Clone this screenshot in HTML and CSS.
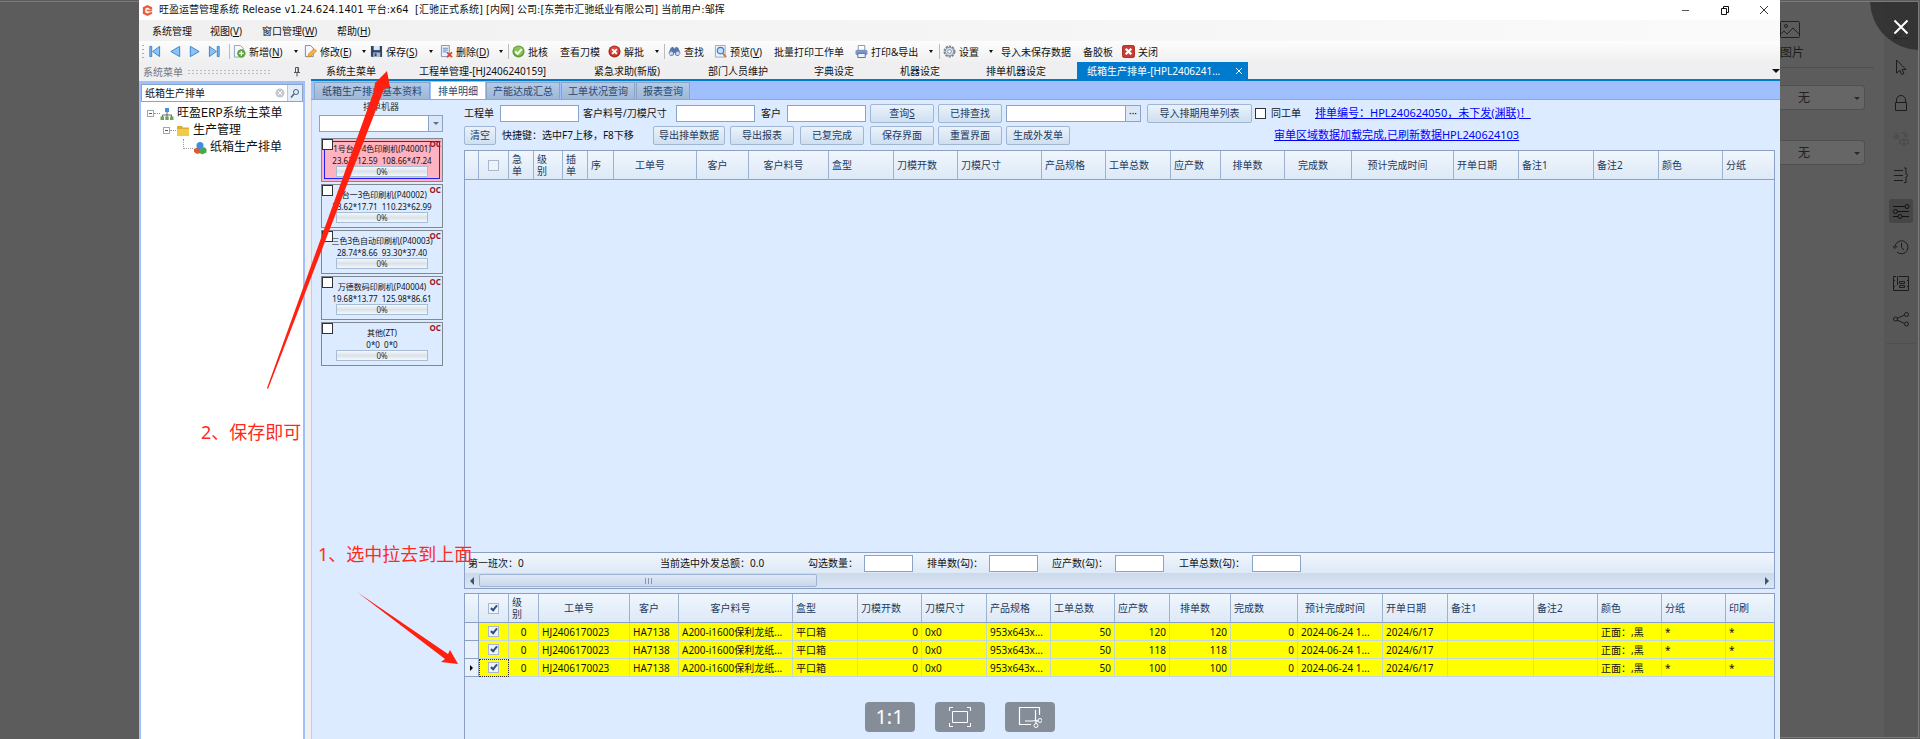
FILE: index.html
```html
<!DOCTYPE html>
<html lang="zh-CN">

<head>
    <meta charset="UTF-8">
    <meta name="viewport" content="width=device-width, initial-scale=1.0">
    <title>旺盈运营管理系统</title>
    <link rel="stylesheet" href="styles.css">
</head>

<body>

    <div class="viewer">
        <div class="backdrop-left"></div>

        <div class="window">
            <header class="titlebar">
                <svg class="logo" viewBox="0 0 14 14"><path d="M7 1L12 3.500V6H9.500V5L7 3.700 4.500 5V9L7 10.300 9.500 9H12V10.500L7 13 2 10.500V3.500Z" fill="#ee5a35"/><path d="M6 6H12V8H6Z" fill="#f0714f"/></svg>
                <h1>旺盈运营管理系统 Release v1.24.624.1401 平台:x64&nbsp; [汇驰正式系统] [内网] 公司:[东莞市汇驰纸业有限公司] 当前用户:邹挥</h1>
                <div class="window-buttons">
                    <button aria-label="最小化"><svg viewBox="0 0 10 10"><path d="M1 5.500H8" stroke="#555" fill="none"/></svg></button>
                    <button aria-label="还原"><svg viewBox="0 0 10 10"><path d="M1.500 3.500H6.500V9.500H1.500ZM3.500 3.500V1.500H8.500V7.500H6.500" stroke="#111" fill="none"/></svg></button>
                    <button aria-label="关闭窗口"><svg viewBox="0 0 10 10"><path d="M1 1L9 9M9 1L1 9" stroke="#333" fill="none"/></svg></button>
                </div>
            </header>

            <nav class="menubar">
                <button>系统管理</button>
                <button>视图(<u>V</u>)</button>
                <button>窗口管理(<u>W</u>)</button>
                <button>帮助(<u>H</u>)</button>
            </nav>

            <div class="toolbar">
                <span class="grip"></span>
                <button aria-label="首条"><svg viewBox="0 0 14 14"><path d="M2 1.500H4V12.500H2ZM12.500 1.500V12.500L5 7Z" fill="#8ec2f2" stroke="#2f7fd0"/></svg></button>
                <button aria-label="上一条"><svg viewBox="0 0 14 14"><path d="M11.500 1.500V12.500L2 7Z" fill="#8ec2f2" stroke="#2f7fd0"/></svg></button>
                <button aria-label="下一条"><svg viewBox="0 0 14 14"><path d="M2.500 1.500V12.500L12 7Z" fill="#8ec2f2" stroke="#2f7fd0"/></svg></button>
                <button aria-label="末条"><svg viewBox="0 0 14 14"><path d="M10 1.500H12V12.500H10ZM1.500 1.500V12.500L9 7Z" fill="#8ec2f2" stroke="#2f7fd0"/></svg></button>
                <span class="sep"></span>
                <button><svg viewBox="0 0 14 14"><path d="M1.500 .5H8L11 3.500V13H1.500Z" fill="#f4f7fc" stroke="#8a9fbd"/><circle cx="9" cy="9" r="4.500" fill="#59a338"/><path d="M9 6.500V11.500M6.500 9H11.500" stroke="#fff" stroke-width="1.500"/></svg>新增(<u>N</u>)</button>
                <button class="caret" aria-label="新增选项"></button>
                <button><svg viewBox="0 0 14 14"><path d="M1.500 .5H7L10 3.500V12.500H1.500Z" fill="#f4f7fc" stroke="#6d86b5"/><path d="M4 13L5 9.500 11 4 13.500 6.500 7.500 12Z" fill="#f5b43c" stroke="#c77b1d" stroke-width=".7"/></svg>修改(<u>E</u>)</button>
                <button class="caret" aria-label="修改选项"></button>
                <button><svg viewBox="0 0 14 14"><path d="M1 1H13V13H2L1 12Z" fill="#2f4668"/><path d="M4 1H10.500V5.500H4Z" fill="#dfe8f4"/><path d="M3.500 8H11V13H3.500Z" fill="#a9b9cf"/><path d="M5 9H7V12H5Z" fill="#2f4668"/></svg>保存(<u>S</u>)</button>
                <button class="caret" aria-label="保存选项"></button>
                <button><svg viewBox="0 0 14 14"><path d="M1.500 .5H10V12.500H1.500Z" fill="#edf3fb" stroke="#7590bd"/><path d="M3 3.500H8.500M3 5.500H8.500M3 7.500H7" stroke="#5c80bb"/><path d="M7.500 8L13 13M13 8L7.500 13" stroke="#e2432e" stroke-width="2"/></svg>删除(<u>D</u>)</button>
                <button class="caret" aria-label="删除选项"></button>
                <span class="sep"></span>
                <button><svg viewBox="0 0 14 14"><circle cx="7" cy="7" r="6.500" fill="#5d9e35"/><circle cx="7" cy="6.500" r="5" fill="#8cc45b"/><path d="M3.500 7L6 9.500 10.500 4.500" fill="none" stroke="#fff" stroke-width="2"/></svg>批核</button>
                <button>查看刀模</button>
                <button><svg viewBox="0 0 14 14"><circle cx="7" cy="7" r="6.500" fill="#b3261e"/><circle cx="7" cy="6.500" r="5" fill="#d9483c"/><path d="M4.500 4.500L9.500 9.500M9.500 4.500L4.500 9.500" stroke="#fff" stroke-width="2"/></svg>解批</button>
                <button class="caret" aria-label="解批选项"></button>
                <span class="sep"></span>
                <button><svg viewBox="0 0 14 14"><path d="M3 3L5.500 2 7 4 8.500 2 11 3 13.500 9 11 12 8 11 7 8 6 11 3 12 .5 9Z" fill="#5874ad"/><circle cx="3.500" cy="9" r="2" fill="#c9d9f3"/><circle cx="10.500" cy="9" r="2" fill="#c9d9f3"/></svg>查找</button>
                <button><svg viewBox="0 0 14 14"><path d="M1.500 .5H12V13H1.500Z" fill="#edf3fb" stroke="#8ba6cf"/><circle cx="7" cy="6" r="3.500" fill="#bfe0fb" stroke="#4a78b8" stroke-width="1.200"/><path d="M9.500 9L13 13" stroke="#c77b3d" stroke-width="2"/></svg>预览(<u>V</u>)</button>
                <button>批量打印工作单</button>
                <button><svg viewBox="0 0 14 14"><path d="M3.500 .5H10.500V6H3.500Z" fill="#fff" stroke="#7b90b5"/><rect x=".5" y="5" width="13" height="6" rx="2" fill="#7d96c4"/><path d="M3 9H11V13.500H3Z" fill="#eef4fc" stroke="#4a6aa5"/></svg>打印&amp;导出</button>
                <button class="caret" aria-label="打印选项"></button>
                <span class="sep"></span>
                <button><svg viewBox="0 0 14 14"><circle cx="7" cy="7" r="5.500" fill="#e8edf3" stroke="#7e8998" stroke-width="2" stroke-dasharray="2.500 1"/><circle cx="7" cy="7" r="4.500" fill="#d9e1ea" stroke="#7e8998"/><circle cx="7" cy="7" r="2" fill="#fff" stroke="#7e8998"/></svg>设置</button>
                <button class="caret" aria-label="设置选项"></button>
                <button>导入未保存数据</button>
                <button>备胶板</button>
                <button><svg viewBox="0 0 14 14"><rect x=".5" y=".5" width="13" height="13" rx="2" fill="#cb3a33" stroke="#9e2a26"/><path d="M4 4L10 10M10 4L4 10" stroke="#fff" stroke-width="2.500"/></svg>关闭</button>
            </div>

            <div class="workspace">
                <aside class="sidebar">
                    <div class="sidebar-title">
                        <span>系统菜单</span>
                        <i class="dots"></i>
                        <svg class="pin" viewBox="0 0 8 10"><path d="M2.500 .5H5.500V5.500H2.500ZM1 5.500H7M4 5.500V9.500M5 1V5" fill="none" stroke="#555"/></svg>
                    </div>
                    <div class="tree-panel">
                        <div class="search">
                            <input type="text" value="纸箱生产排单" aria-label="搜索菜单">
                            <svg class="clear" viewBox="0 0 10 10"><circle cx="5" cy="5" r="4.500" fill="#c3c9d0"/><path d="M3 3L7 7M7 3L3 7" stroke="#fff"/></svg>
                            <button aria-label="搜索"><svg viewBox="0 0 10 10"><circle cx="6" cy="4" r="2.500" fill="none" stroke="#4b5f80"/><path d="M4 6L1 9.500" stroke="#4b5f80" stroke-width="1.500"/></svg></button>
                        </div>
                        <ul class="tree">
                            <li>
                                <div class="node"><i class="fold"></i><i class="twig"></i><svg viewBox="0 0 14 14"><path d="M7 5V8M2.500 10V8H11.500V10M7 8V10" fill="none" stroke="#667"/><path d="M5 1H9V5H5Z" fill="#4b8fdc"/><path d="M.5 9.500H4V13H.5ZM5.300 9.500H8.700V13H5.300ZM10 9.500H13.500V13H10Z" fill="#6aa84f"/></svg>旺盈ERP系统主菜单</div>
                                <ul>
                                    <li>
                                        <div class="node"><i class="fold"></i><i class="twig"></i><svg viewBox="0 0 14 14"><path d="M1 2H6L7 3.500H13V12H1Z" fill="#dcae2a"/><path d="M1 5H13V12H1Z" fill="#efca4b"/></svg>生产管理</div>
                                        <ul>
                                            <li>
                                                <div class="node leaf"><svg viewBox="0 0 14 14"><path d="M1 8L5 6 8 8V12L4 13 1 11Z" fill="#e05a30"/><path d="M7 8L11 6 13.500 8V11.500L9 13.500 7 12Z" fill="#4ca64a"/><circle cx="7" cy="4.500" r="3.500" fill="#3f8fdd"/></svg>纸箱生产排单</div>
                                            </li>
                                        </ul>
                                    </li>
                                </ul>
                            </li>
                        </ul>
                    </div>
                </aside>

                <main class="main">
                    <div class="doc-tabs">
                        <button>系统主菜单</button>
                        <button>工程单管理-[HJ2406240159]</button>
                        <button>紧急求助(新版)</button>
                        <button>部门人员维护</button>
                        <button>字典设定</button>
                        <button>机器设定</button>
                        <button>排单机器设定</button>
                        <button class="active">纸箱生产排单-[HPL2406241... <svg viewBox="0 0 8 8"><path d="M1 1L7 7M7 1L1 7" stroke="#fff"/></svg></button>
                        <button class="caret big" aria-label="更多标签"></button>
                    </div>
                    <div class="page-tabs">
                        <button>纸箱生产排单基本资料</button>
                        <button class="active">排单明细</button>
                        <button>产能达成汇总</button>
                        <button>工单状况查询</button>
                        <button>报表查询</button>
                    </div>

                    <div class="page">
                        <section class="machines">
                            <label for="machine">排单机器</label>
                            <div class="combo"><select id="machine"><option></option></select><span class="combo-arrow"></span></div>

                            <article class="machine selected">
                                <input type="checkbox" aria-label="P40001"><b>OC</b>
                                <p>1号台一4色印刷机(P40001)</p>
                                <p>23.62*12.59&nbsp; 108.66*47.24</p>
                                <div class="bar">0%</div>
                            </article>
                            <article class="machine">
                                <input type="checkbox" aria-label="P40002"><b>OC</b>
                                <p>2台一3色印刷机(P40002)</p>
                                <p>23.62*17.71&nbsp; 110.23*62.99</p>
                                <div class="bar">0%</div>
                            </article>
                            <article class="machine">
                                <input type="checkbox" aria-label="P40003"><b>OC</b>
                                <p>三色3色自动印刷机(P40003)</p>
                                <p>28.74*8.66&nbsp; 93.30*37.40</p>
                                <div class="bar">0%</div>
                            </article>
                            <article class="machine">
                                <input type="checkbox" aria-label="P40004"><b>OC</b>
                                <p>万德数码印刷机(P40004)</p>
                                <p>19.68*13.77&nbsp; 125.98*86.61</p>
                                <div class="bar">0%</div>
                            </article>
                            <article class="machine">
                                <input type="checkbox" aria-label="ZT"><b>OC</b>
                                <p>其他(ZT)</p>
                                <p>0*0&nbsp; 0*0</p>
                                <div class="bar">0%</div>
                            </article>
                        </section>

                        <section class="detail">
                            <div class="filters row-query">
                                <label for="project">工程单</label>
                                <input type="text" id="project">
                                <label for="part">客户料号/刀模尺寸</label>
                                <input type="text" id="part">
                                <label for="customer">客户</label>
                                <input type="text" id="customer">
                                <button class="btn">查询<u>S</u></button>
                                <button class="btn">已排查找</button>
                                <div class="picker"><input type="text" aria-label="排期"><button aria-label="选择排期">···</button></div>
                                <button class="btn">导入排期甩单列表</button>
                                <label class="same"><input type="checkbox">同工单</label>
                                <a href="#">排单编号：HPL240624050，未下发(渊联)！</a>
                            </div>
                            <div class="filters row-actions">
                                <button class="btn">清空</button>
                                <span>快捷键：选中F7上移，F8下移</span>
                                <button class="btn">导出排单数据</button>
                                <button class="btn">导出报表</button>
                                <button class="btn">已复完成</button>
                                <button class="btn">保存界面</button>
                                <button class="btn">重置界面</button>
                                <button class="btn">生成外发单</button>
                                <a href="#">审单区域数据加载完成,已刷新数据HPL240624103</a>
                            </div>

                            <div class="grid grid-top">
                                <table>
                                    <colgroup>
                                        <col class="w14"><col class="w30"><col class="w25"><col class="w29"><col class="w25"><col class="w26"><col class="w83"><col class="w52"><col class="w80"><col class="w65"><col class="w64"><col class="w84"><col class="w64"><col class="w65"><col class="w50"><col class="w64"><col class="w67"><col class="w102"><col class="w65"><col class="w75"><col class="w65"><col class="w64"><col>
                                    </colgroup>
                                    <thead>
                                        <tr>
                                            <th></th>
                                            <th class="check"><input type="checkbox" class="tick" aria-label="全选"></th>
                                            <th>急<br>单</th>
                                            <th>级<br>别</th>
                                            <th>插<br>单</th>
                                            <th>序</th>
                                            <th class="mid">工单号</th>
                                            <th class="mid">客户</th>
                                            <th class="mid">客户料号</th>
                                            <th>盒型</th>
                                            <th>刀模开数</th>
                                            <th>刀模尺寸</th>
                                            <th>产品规格</th>
                                            <th>工单总数</th>
                                            <th>应产数</th>
                                            <th class="mid">排单数</th>
                                            <th class="mid">完成数</th>
                                            <th class="mid">预计完成时间</th>
                                            <th>开单日期</th>
                                            <th>备注1</th>
                                            <th>备注2</th>
                                            <th>颜色</th>
                                            <th>分纸</th>
                                        </tr>
                                    </thead>
                                </table>
                            </div>

                            <div class="summary">
                                <span>第一班次：0</span>
                                <span>当前选中外发总额：0.0</span>
                                <label for="sum1">勾选数量：</label>
                                <input type="text" id="sum1">
                                <label for="sum2">排单数(勾)：</label>
                                <input type="text" id="sum2">
                                <label for="sum3">应产数(勾)：</label>
                                <input type="text" id="sum3">
                                <label for="sum4">工单总数(勾)：</label>
                                <input type="text" id="sum4">
                            </div>
                            <div class="scrollbar">
                                <i class="arrow-left"></i>
                                <div class="track"><div class="thumb"></div></div>
                                <i class="arrow-right"></i>
                            </div>

                            <div class="grid grid-bottom">
                                <table>
                                    <colgroup>
                                        <col class="w14"><col class="w30"><col class="w30"><col class="w91"><col class="w49"><col class="w114"><col class="w65"><col class="w64"><col class="w65"><col class="w64"><col class="w64"><col class="w55"><col class="w61"><col class="w67"><col class="w85"><col class="w65"><col class="w86"><col class="w64"><col class="w64"><col class="w64"><col>
                                    </colgroup>
                                    <thead>
                                        <tr>
                                            <th></th>
                                            <th class="check"><input type="checkbox" class="tick" checked aria-label="全选"></th>
                                            <th>级<br>别</th>
                                            <th class="mid">工单号</th>
                                            <th class="mid">客户</th>
                                            <th class="mid">客户料号</th>
                                            <th>盒型</th>
                                            <th>刀模开数</th>
                                            <th>刀模尺寸</th>
                                            <th>产品规格</th>
                                            <th>工单总数</th>
                                            <th>应产数</th>
                                            <th class="mid">排单数</th>
                                            <th>完成数</th>
                                            <th class="mid">预计完成时间</th>
                                            <th>开单日期</th>
                                            <th>备注1</th>
                                            <th>备注2</th>
                                            <th>颜色</th>
                                            <th>分纸</th>
                                            <th>印刷</th>
                                        </tr>
                                    </thead>
                                    <tbody>
                                        <tr>
                                            <td class="handle"></td>
                                            <td class="check"><input type="checkbox" class="tick" checked aria-label="选择第1行"></td>
                                            <td class="mid">0</td>
                                            <td>HJ2406170023</td>
                                            <td>HA7138</td>
                                            <td>A200-i1600保利龙纸...</td>
                                            <td>平口箱</td>
                                            <td class="num">0</td>
                                            <td>0x0</td>
                                            <td>953x643x...</td>
                                            <td class="num">50</td>
                                            <td class="num">120</td>
                                            <td class="num">120</td>
                                            <td class="num">0</td>
                                            <td>2024-06-24 1...</td>
                                            <td>2024/6/17</td>
                                            <td></td>
                                            <td></td>
                                            <td>正面：,黑</td>
                                            <td>*</td>
                                            <td>*</td>
                                        </tr>
                                        <tr>
                                            <td class="handle"></td>
                                            <td class="check"><input type="checkbox" class="tick" checked aria-label="选择第2行"></td>
                                            <td class="mid">0</td>
                                            <td>HJ2406170023</td>
                                            <td>HA7138</td>
                                            <td>A200-i1600保利龙纸...</td>
                                            <td>平口箱</td>
                                            <td class="num">0</td>
                                            <td>0x0</td>
                                            <td>953x643x...</td>
                                            <td class="num">50</td>
                                            <td class="num">118</td>
                                            <td class="num">118</td>
                                            <td class="num">0</td>
                                            <td>2024-06-24 1...</td>
                                            <td>2024/6/17</td>
                                            <td></td>
                                            <td></td>
                                            <td>正面：,黑</td>
                                            <td>*</td>
                                            <td>*</td>
                                        </tr>
                                        <tr class="current">
                                            <td class="handle"><i></i></td>
                                            <td class="check"><input type="checkbox" class="tick" checked aria-label="选择第3行"></td>
                                            <td class="mid">0</td>
                                            <td>HJ2406170023</td>
                                            <td>HA7138</td>
                                            <td>A200-i1600保利龙纸...</td>
                                            <td>平口箱</td>
                                            <td class="num">0</td>
                                            <td>0x0</td>
                                            <td>953x643x...</td>
                                            <td class="num">50</td>
                                            <td class="num">100</td>
                                            <td class="num">100</td>
                                            <td class="num">0</td>
                                            <td>2024-06-24 1...</td>
                                            <td>2024/6/17</td>
                                            <td></td>
                                            <td></td>
                                            <td>正面：,黑</td>
                                            <td>*</td>
                                            <td>*</td>
                                        </tr>
                                    </tbody>
                                </table>
                            </div>
                        </section>
                    </div>
                </main>
            </div>

            <!-- 标注 -->
            <svg class="arrow arrow-save" viewBox="0 0 124 318"><path d="M0 317L107 20 108 12 120 0 123 16 117 18 1 318Z" fill="#ff2010"/></svg>
            <svg class="arrow arrow-drag" viewBox="0 0 102 72"><path d="M0 0L91 62 93 58 101 72 84 70 88 67Z" fill="#ff2010"/></svg>
            <p class="note note-save">2、保存即可</p>
            <p class="note note-drag">1、选中拉去到上面</p>

            <div class="viewer-tools">
                <button>1:1</button>
                <button aria-label="适应窗口"><svg viewBox="0 0 24 22"><path d="M1.500 5V1.500H5M19 1.500H22.500V5M22.500 17V20.500H19M5 20.500H1.500V17M4.500 5.500H19.500V16.500H4.500Z" fill="none" stroke="#fff"/></svg></button>
                <button aria-label="截图"><svg viewBox="0 0 24 22"><path d="M21.500 9V1.500H1.500V18.500H13M7 15H14L18 14.500M17.500 4V14L21 15.500M18 14L18 18" fill="none" stroke="#fff" stroke-width="1.200"/><circle cx="22" cy="14.500" r="2" fill="none" stroke="#fff"/><circle cx="18" cy="19.500" r="2" fill="none" stroke="#fff"/></svg></button>
            </div>
        </div>

        <div class="backdrop-right">
            <div class="props">
                <div class="props-head">
                    <svg viewBox="0 0 20 17"><rect x=".5" y=".5" width="19" height="16" rx="1" fill="none" stroke="#222"/><circle cx="6" cy="5" r="1.500" fill="none" stroke="#222"/><path d="M1 13L4 10 7 13 13 7 19 13" fill="none" stroke="#222"/></svg>
                    <span>图片</span>
                </div>
                <div class="dark-combo"><select aria-label="填充"><option>无</option></select></div>
                <div class="dark-combo"><select aria-label="边框"><option>无</option></select></div>
            </div>
            <nav class="rail">
                <button aria-label="编辑"><svg viewBox="0 0 18 18"><path d="M1 16.500H16M3 15.500L4 11 12 3 15 6 7 14Z" fill="none" stroke="#1c1c1c"/></svg></button>
                <button aria-label="选择"><svg viewBox="0 0 18 18"><path d="M4.500 2L14 11.500H10L12 15.500 9.500 16.500 8 12.500 4.500 15Z" fill="none" stroke="#1c1c1c"/></svg></button>
                <button aria-label="保护"><svg viewBox="0 0 18 18"><path d="M3.500 8.500H14.500V16.500H3.500ZM4.500 8.500V6A4.500 4.500 0 0 1 13.500 6V8.500" fill="none" stroke="#1c1c1c"/></svg></button>
                <button aria-label="翻译"><svg viewBox="0 0 18 18"><path d="M2 4Q6 2 6 5V9M6 6Q1 5 2 8 4 10 6 7M9 3H14V6M12 5L14 7 16 5M8 10H16V14H8ZM12 8V17" fill="none" stroke="#484848"/></svg></button>
                <button aria-label="大纲"><svg viewBox="0 0 18 18"><path d="M2 4.500H11M2 9.500H11M2 14.500H11M12 2H14V8L16 9.500 14 11V16.500H12" fill="none" stroke="#1c1c1c"/></svg></button>
                <button class="active" aria-label="属性"><svg viewBox="0 0 18 18"><path d="M1 4.500H13M5.500 9.500H17M1 14.500H6M10 14.500H17" fill="none" stroke="#111"/><circle cx="15" cy="4.500" r="2" fill="none" stroke="#111"/><circle cx="3.500" cy="9.500" r="2" fill="none" stroke="#111"/><circle cx="8" cy="14.500" r="2" fill="none" stroke="#111"/></svg></button>
                <button aria-label="历史"><svg viewBox="0 0 18 18"><path d="M3 9A6.500 6.500 0 1 1 5 14M1 8L3 10.500 5.500 8M9.500 5V9.500L12 12" fill="none" stroke="#1c1c1c"/></svg></button>
                <button aria-label="图库"><svg viewBox="0 0 18 18"><path d="M4 2.500H1.500V16.500H16.500V2.500H7M5.500 2V11M1 6.500H3M1 12.500H3M15 6.500H17M15 12.500H17M7.500 7.500H12.500V9.500H7.500ZM7.500 11.500H12.500V13.500H7.500Z" fill="none" stroke="#1c1c1c"/></svg></button>
                <button aria-label="分享"><svg viewBox="0 0 18 18"><path d="M5 8.500L12.500 5M5 10L12.500 13.500" stroke="#1c1c1c"/><circle cx="3.500" cy="9" r="2" fill="none" stroke="#1c1c1c"/><circle cx="14.500" cy="4.500" r="2" fill="none" stroke="#1c1c1c"/><circle cx="14.500" cy="14" r="2" fill="none" stroke="#1c1c1c"/></svg></button>
            </nav>
            <button class="close-viewer" aria-label="关闭"><svg viewBox="0 0 16 16"><path d="M1.500 1.500L14.500 14.500M14.500 1.500L1.500 14.500" stroke="#fff" stroke-width="2"/></svg></button>
        </div>
    </div>

</body>

</html>
```
FILE: styles.css
```css
* {
    box-sizing: border-box;
}

body {
    margin: 0;
    font-family: "Noto Sans", "Noto Sans CJK SC", sans-serif;
    font-size: 10px;
    line-height: 14px;
    color: #111;
    background-color: #5c5c5c;
}

button,
input,
select {
    font: inherit;
    color: inherit;
    margin: 0;
    padding: 0;
}

button {
    border: 0;
    background: none;
    white-space: nowrap;
}

svg {
    display: block;
    flex: none;
}

ul,
p,
h1 {
    margin: 0;
    padding: 0;
}

/* viewer */
.viewer {
    display: grid;
    grid-template-columns: 139px minmax(0, 1fr) 140px;
    height: 100vh;
    min-height: 600px;
    overflow: hidden;
}

.backdrop-left {
    margin-top: 1px;
    border-top: 1px solid #7a7a7a;
}

.window {
    position: relative;
    display: flex;
    flex-direction: column;
    min-width: 0;
    overflow: hidden;
    background-color: #f0f0f0;
}

/* title and menu */
.titlebar {
    display: flex;
    align-items: center;
    height: 20px;
    padding-left: 2px;
    background-color: #fff;
}

.logo {
    width: 13px;
    height: 13px;
    margin-right: 5px;
}

.titlebar h1 {
    flex: 1;
    font-family: "DejaVu Sans", "Noto Sans CJK SC", sans-serif;
    font-size: 10px;
    font-weight: normal;
    white-space: nowrap;
}

.window-buttons {
    display: flex;
    gap: 29px;
    padding-right: 11px;
}

.window-buttons svg {
    width: 10px;
    height: 10px;
}

.menubar {
    display: grid;
    grid-template-columns: 58px 52px 75px 60px;
    height: 21px;
    padding-left: 13px;
    background: linear-gradient(to right, #f0f0f0, #fafafa);
}

.menubar button {
    text-align: left;
}

.toolbar {
    display: grid;
    grid-template-columns: 6px 21px 19px 20px 21px 4px 59px 12px 56px 10px 57px 13px 57px 11px 4px 48px 48px 45px 11px 4px 46px 60px 81px 72px 12px 4px 44px 14px 82px 39px 60px;
    align-items: center;
    height: 21px;
    padding-left: 3px;
    background: linear-gradient(#fdfdfd, #f0f0f0);
}

.toolbar button {
    display: flex;
    align-items: center;
    height: 20px;
}

.toolbar svg {
    width: 13px;
    height: 13px;
    margin-right: 3px;
}

.grip {
    height: 14px;
    width: 2px;
    background: repeating-linear-gradient(#aaa 0 1px, transparent 1px 4px);
}

.sep {
    width: 1px;
    height: 15px;
    background-color: #bbb;
}

.caret::before {
    content: "";
    width: 0;
    border: 2px solid transparent;
    border-top: 3px solid #111;
    border-bottom: 0;
    margin-left: 2px;
}

/* workspace */
.workspace {
    display: flex;
    flex: 1;
    min-height: 0;
}

.sidebar {
    display: flex;
    flex-direction: column;
    width: 172px;
    flex: none;
    background-color: #efeff2;
}

.sidebar-title {
    display: flex;
    align-items: center;
    height: 19px;
    padding-left: 4px;
    color: #777;
}

.dots {
    width: 84px;
    height: 5px;
    margin: 0 22px 0 4px;
    background-image: radial-gradient(#bbb 1px, transparent 1px);
    background-size: 4px 3px;
}

.pin {
    width: 8px;
    height: 10px;
}

.tree-panel {
    flex: 1;
    width: 166px;
    border: 2px solid #a0bfff;
    border-top-width: 3px;
    border-bottom: 0;
    background-color: #fff;
}

.search {
    display: flex;
    align-items: center;
    height: 18px;
    border: 1px solid #8aa4c8;
}

.search input {
    flex: 1;
    min-width: 0;
    border: 0;
    padding-left: 3px;
    outline: 0;
}

.search .clear {
    width: 10px;
    height: 10px;
    margin-right: 2px;
}

.search button {
    width: 15px;
    height: 16px;
    padding-left: 2px;
    border-left: 1px solid #b4c6e0;
    background-color: #e3edfa;
}

.search button svg {
    width: 10px;
    height: 10px;
}

.tree {
    padding: 3px 0 0 6px;
    list-style: none;
    font-family: "Liberation Mono", "Noto Sans CJK SC", monospace;
    font-size: 12px;
}

.tree ul {
    list-style: none;
    padding-left: 16px;
}

.node {
    display: flex;
    align-items: center;
    height: 17px;
    white-space: nowrap;
}

.node svg {
    width: 14px;
    height: 14px;
    margin-right: 3px;
}

.fold {
    width: 7px;
    height: 7px;
    border: 1px solid #9aa;
    background: linear-gradient(#557, #557) center / 3px 1px no-repeat;
}

.twig {
    width: 6px;
    border-top: 1px dotted #999;
}

.leaf::before {
    content: "";
    width: 9px;
    height: 9px;
    margin: 0 0 8px 4px;
    border: 1px dotted #999;
    border-width: 0 0 1px 1px;
}

.main {
    display: flex;
    flex-direction: column;
    flex: 1;
    min-width: 0;
    background-color: #dcebff;
}

.doc-tabs {
    display: grid;
    grid-template-columns: 93px 175px 114px 106px 86px 86px 91px 171px 1fr;
    height: 19px;
    padding-left: 15px;
    border-bottom: 2px solid #007acc;
    background-color: #efeff2;
}

.doc-tabs button {
    text-align: left;
}

.doc-tabs .active {
    display: flex;
    align-items: center;
    justify-content: space-between;
    padding: 0 5px 0 10px;
    color: #fff;
    background-color: #007acc;
}

.doc-tabs svg {
    width: 8px;
    height: 8px;
}

.doc-tabs .caret {
    justify-self: end;
}

.big::before {
    display: block;
    border-width: 4px;
    border-top-width: 4px;
}

.page-tabs {
    display: flex;
    gap: 1px;
    height: 19px;
    padding: 1px 0 0 3px;
    border-bottom: 1px solid #8aa7d8;
    background-color: #a0bfff;
}

.page-tabs button {
    padding: 0 6px;
    border: 1px solid #8aa4c8;
    border-bottom: 0;
    color: #2b466e;
    background: linear-gradient(#b5cae6, #9db7d6);
}

.page-tabs button:first-child {
    min-width: 116px;
}

.page-tabs .active {
    border-color: #fff;
    background: #fff;
}

.page {
    display: flex;
    flex: 1;
    min-height: 0;
}

/* machine list */
.machines {
    display: flex;
    flex-direction: column;
    gap: 2px;
    width: 152px;
    flex: none;
    padding: 1px 20px 0 7px;
    border-left: 1px solid #b9cfee;
    font-size: 8px;
    line-height: 12px;
}

.machines > label {
    text-align: center;
    font-size: 9px;
    color: #333;
}

.combo {
    position: relative;
    height: 17px;
    margin: 0 0 4px;
}

.combo select {
    appearance: none;
    width: 100%;
    height: 17px;
    border: 1px solid #8aa4c8;
    border-radius: 0;
    background-color: #fff;
}

.combo-arrow {
    position: absolute;
    top: 1px;
    right: 1px;
    width: 14px;
    height: 15px;
    border-left: 1px solid #8aa4c8;
    background-color: #dbe7f6;
    pointer-events: none;
}

.combo-arrow::before {
    content: "";
    position: absolute;
    top: 6px;
    left: 4px;
    border: 3px solid transparent;
    border-top-color: #5b6f92;
    border-bottom: 0;
}

.machine {
    position: relative;
    height: 44px;
    margin-left: 2px;
    padding-top: 4px;
    border: 1px solid #808890;
    text-align: center;
    white-space: nowrap;
}

.selected {
    background-color: #ffb3c0;
    outline: 1px solid #2222ee;
    outline-offset: -4px;
}

.machine input {
    position: absolute;
    top: 0;
    left: 0;
}

.machine b {
    position: absolute;
    top: 0;
    right: 1px;
    line-height: 10px;
    color: #a01525;
}

.bar {
    width: 92px;
    height: 11px;
    margin: -1px auto 0;
    border: 1px solid #a9bcd6;
    line-height: 9px;
    color: #333;
    background: linear-gradient(#f5f8fb, #d9e2ea, #f5f8fb);
}

input[type="checkbox"] {
    appearance: none;
    width: 11px;
    height: 11px;
    border: 1px solid #333;
    background-color: #fff;
}

input.tick {
    display: block;
    width: 11px;
    height: 11px;
    margin: 0 auto;
    border-color: #a9b8cc;
    background-color: #eef3f9;
}

.tick:checked::before {
    content: "";
    display: block;
    width: 2px;
    height: 5px;
    margin: 0 0 0 3px;
    border: solid #2f4f82;
    border-width: 0 2px 2px 0;
    box-sizing: content-box;
    rotate: 40deg;
}

/* filters */
.detail {
    display: flex;
    flex-direction: column;
    flex: 1;
    min-width: 0;
    padding: 2px 5px 0 1px;
}

.filters {
    display: grid;
    align-items: center;
    height: 22px;
    white-space: nowrap;
}

.row-query {
    grid-template-columns: 36px 83px 93px 85px 26px 83px 68px 68px 141px 108px 60px 1fr;
}

.row-actions {
    grid-template-columns: 38px 151px 77px 70px 70px 68px 68px 268px 1fr;
}

.filters input[type="text"],
.summary input {
    height: 17px;
    border: 1px solid #8aa4c8;
    background-color: #fff;
}

.filters > input[type="text"] {
    width: 79px;
}

.btn {
    justify-self: start;
    min-width: 64px;
    height: 19px;
    padding: 0 5px;
    border: 1px solid #a0b6d3;
    border-radius: 2px;
    color: #1e395b;
    background: linear-gradient(#eaf2fc, #cfdff0);
}

.btn:first-child {
    min-width: 32px;
}

.row-query .btn:nth-of-type(3) {
    min-width: 105px;
}

.picker {
    display: flex;
    width: 135px;
}

.picker input {
    flex: 1;
    min-width: 0;
}

.picker button {
    width: 15px;
    border: 1px solid #8aa4c8;
    border-left: 0;
    line-height: 12px;
    background-color: #dbe7f6;
}

.same {
    display: flex;
    align-items: center;
    gap: 5px;
}

.filters a {
    font-size: 11px;
    color: #0000ff;
}

/* grids */
.grid {
    overflow: hidden;
    border: 1px solid #8ba0c4;
    border-bottom: 0;
}

.grid-top {
    flex: 1;
    margin-top: 4px;
}

.grid-bottom {
    height: 146px;
    margin-top: 4px;
}

table {
    width: 100%;
    table-layout: fixed;
    border-collapse: separate;
    border-spacing: 0;
}

.w14 { width: 14px; }
.w25 { width: 25px; }
.w26 { width: 26px; }
.w29 { width: 29px; }
.w30 { width: 30px; }
.w49 { width: 49px; }
.w50 { width: 50px; }
.w52 { width: 52px; }
.w55 { width: 55px; }
.w61 { width: 61px; }
.w64 { width: 64px; }
.w65 { width: 65px; }
.w67 { width: 67px; }
.w75 { width: 75px; }
.w80 { width: 80px; }
.w83 { width: 83px; }
.w84 { width: 84px; }
.w85 { width: 85px; }
.w86 { width: 86px; }
.w91 { width: 91px; }
.w102 { width: 102px; }
.w114 { width: 114px; }

th {
    height: 29px;
    padding: 0 0 0 3px;
    border-right: 1px solid #9db2d2;
    border-bottom: 1px solid #8ba0c4;
    font-weight: normal;
    line-height: 12px;
    text-align: left;
    white-space: nowrap;
    color: #1e395b;
    background: linear-gradient(#f0f6fd, #dde9f7);
}

th.mid {
    padding: 0 10px 0 0;
    text-align: center;
}

th.check,
td.check {
    padding: 0;
}

td {
    height: 18px;
    padding: 0 3px;
    border-right: 1px solid #c9d8b8;
    border-bottom: 1px solid #c3d6ec;
    line-height: 14px;
    white-space: nowrap;
    background-color: #ffff00;
}

th:last-child,
td:last-child {
    border-right: 0;
}

td.mid {
    text-align: center;
}

td.num {
    text-align: right;
}

td.handle {
    padding: 0 0 0 5px;
    border-color: #8ba0c4;
    background-color: #e8f1fc;
}

.handle i {
    display: block;
    width: 0;
    border: 3px solid transparent;
    border-left-color: #000;
    border-right: 0;
}

.current .check {
    outline: 1px dotted #333;
    outline-offset: -1px;
}

.summary {
    display: grid;
    grid-template-columns: 192px 148px 56px 63px 62px 63px 63px 64px 73px 49px;
    align-items: center;
    height: 21px;
    padding-left: 3px;
    border: 1px solid #8ba0c4;
    border-bottom: 0;
    white-space: nowrap;
    background: linear-gradient(#f0f6fd, #dde9f7);
}

.summary input {
    width: 49px;
}

.scrollbar {
    display: flex;
    align-items: center;
    height: 16px;
    padding: 0 5px;
    border: 1px solid #8ba0c4;
    border-top: 0;
    background: linear-gradient(#cbd9ea, #dbe7f4);
}

.track {
    flex: 1;
    margin: 0 5px;
}

.thumb {
    width: 338px;
    height: 13px;
    border: 1px solid #9fb4d2;
    border-radius: 2px;
    background: repeating-linear-gradient(to right, #8397b8 0 1px, transparent 1px 3px) center / 7px 6px no-repeat, linear-gradient(#dfe9f6, #c8d8eb);
}

.arrow-left,
.arrow-right {
    border: 4px solid transparent;
    border-left: 0;
    border-right: 4px solid #3f5375;
}

.arrow-right {
    border-right: 0;
    border-left: 4px solid #3f5375;
}

/* notes drawn over the window */
.arrow {
    position: absolute;
    pointer-events: none;
}

.arrow-save {
    top: 71px;
    left: 128px;
    width: 124px;
    height: 318px;
}

.arrow-drag {
    top: 592px;
    left: 218px;
    width: 102px;
    height: 72px;
}

.note {
    position: absolute;
    font-size: 18px;
    line-height: 24px;
    white-space: nowrap;
    color: #ff2a1a;
}

.note-save {
    top: 420px;
    left: 62px;
}

.note-drag {
    top: 542px;
    left: 179px;
}

.viewer-tools {
    position: absolute;
    right: 0;
    bottom: 7px;
    left: 0;
    display: flex;
    justify-content: center;
    gap: 20px;
}

.viewer-tools button {
    display: flex;
    align-items: center;
    justify-content: center;
    width: 50px;
    height: 30px;
    border-radius: 4px;
    font-size: 20px;
    color: #fff;
    background-color: #858d99;
}

.viewer-tools svg {
    width: 24px;
    height: 22px;
}

/* dimmed panel on the right */
.backdrop-right {
    position: relative;
    display: flex;
    margin: 1px 1px 1px 0;
    border: 1px solid #7a7a7a;
    border-left: 0;
    overflow: hidden;
}

.props {
    flex: 1;
    padding-right: 19px;
}

.props-head {
    height: 66px;
    margin: 0 -9px 17px 0;
    padding-top: 19px;
    border-bottom: 1px solid #505050;
    font-size: 12px;
    color: #1c1c1c;
}

.props-head svg {
    width: 20px;
    height: 17px;
    margin-bottom: 8px;
}

.dark-combo {
    position: relative;
    height: 25px;
    margin-bottom: 30px;
}

.dark-combo::after {
    content: "";
    position: absolute;
    top: 12px;
    right: 5px;
    border: 3px solid transparent;
    border-top-color: #2a2a2a;
    border-bottom: 0;
}

.dark-combo select {
    appearance: none;
    width: 100%;
    height: 25px;
    padding-left: 18px;
    border: 1px solid #505050;
    border-left: 0;
    border-radius: 0 4px 4px 0;
    font-size: 12px;
    color: #222;
    background-color: #666;
}

.rail {
    display: flex;
    flex-direction: column;
    align-items: center;
    gap: 12px;
    width: 34px;
    padding-top: 17px;
    background-color: #575757;
}

.rail button {
    display: flex;
    align-items: center;
    justify-content: center;
    width: 24px;
    height: 24px;
    border-radius: 3px;
}

.rail .active {
    background-color: #464646;
}

.rail svg {
    width: 18px;
    height: 18px;
}

.rail::after {
    content: "";
    width: 30px;
    border-top: 1px solid #505050;
}

.close-viewer {
    position: absolute;
    top: -2px;
    right: -2px;
    width: 50px;
    height: 50px;
    padding: 13px 0 0 23px;
    border-radius: 0 0 0 50px;
    background-color: rgba(40, 40, 40, 0.75);
}

.close-viewer svg {
    width: 16px;
    height: 16px;
    margin-top: -10px;
}
```
